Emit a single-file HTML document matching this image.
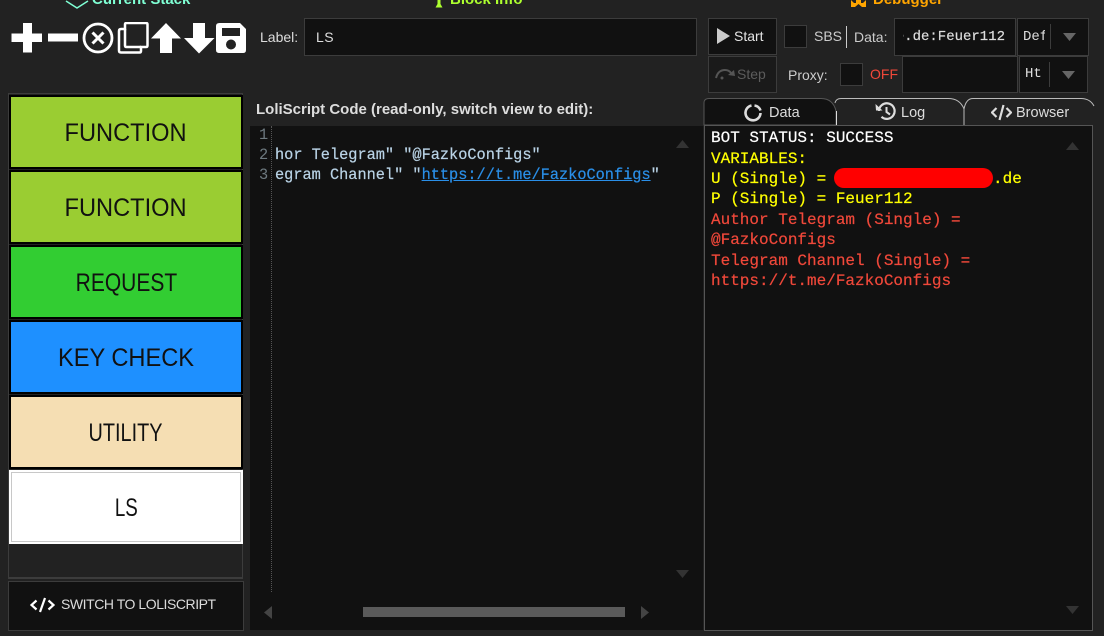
<!DOCTYPE html>
<html>
<head>
<meta charset="utf-8">
<style>
html,body{margin:0;padding:0;background:#222;}
#r{position:relative;width:1104px;height:636px;overflow:hidden;background:#222;font-family:"Liberation Sans",sans-serif;color:#ddd;}
#r div,#r svg,#r span.a{position:absolute;}
.box{box-sizing:border-box;background:#111;border:1px solid #3c3c3c;}
.t{font-size:14px;line-height:18px;white-space:nowrap;color:#ddd;}
.m{font-family:"Liberation Mono",monospace;white-space:nowrap;}
.blk{left:9px;width:234px;height:74px;box-sizing:border-box;border:2px solid #000;color:#111;text-align:center;font-size:25px;line-height:72px;}
.blk span{display:inline-block;transform:scaleX(.945);}
.hd{font-size:15px;font-weight:bold;line-height:18px;white-space:nowrap;}
.ln{left:711px;font-size:16px;line-height:20px;-webkit-text-stroke:.2px currentColor;}
</style>
</head>
<body>
<div id="r">
<!-- cropped headers -->
<svg style="left:64px;top:0" width="26" height="10" viewBox="0 0 26 10"><path d="M2 1 L13 8 L24 1" fill="none" stroke="#7fffd4" stroke-width="1.5"/></svg>
<div class="hd" style="left:92px;top:-9px;color:#7fffd4">Current Stack</div>
<svg style="left:435px;top:0" width="8" height="8" viewBox="0 0 8 8"><path d="M2.500 0H5.500V4L7.500 7.500H0.500L2.500 4Z" fill="#adff2f"/></svg>
<div class="hd" style="left:450px;top:-9px;color:#adff2f">Block Info</div>
<svg style="left:850px;top:0" width="17" height="8" viewBox="0 0 17 8"><path d="M1 0L4 3H6V0H11V3H13L16 0V7H12L8.500 4L5 7H1Z" fill="#ffa500"/></svg>
<div class="hd" style="left:873px;top:-9px;color:#ffa500">Debugger</div>

<!-- toolbar icons -->
<svg style="left:11px;top:22px" width="236" height="33" viewBox="0 0 236 33" fill="#fff">
<path d="M0.500 11.500H12V1H21V11.500H31V20H21V30.500H12V20H0.500Z"/>
<rect x="37" y="11.500" width="30" height="8"/>
<circle cx="87" cy="16" r="14" fill="none" stroke="#fff" stroke-width="2.800"/>
<path d="M81.500 10.500L87 16M92.500 10.500L87 16M81.500 21.500L87 16M92.500 21.500L87 16" stroke="#fff" stroke-width="3" fill="none"/>
<path d="M114 7V2.500Q114 1 115.500 1H135Q136.500 1 136.500 2.500V23.500Q136.500 25 135 25H130V29Q130 30.500 128.500 30.500H110Q108 30.500 108 28.500V9Q108 7 110 7Z" fill="none" stroke="#fff" stroke-width="2.500"/>
<path d="M114 7V23.500Q114 25 115.500 25H130" fill="none" stroke="#fff" stroke-width="2.500"/>
<path d="M155 1L170 16.500H161V31H149V16.500H140Z"/>
<path d="M182 1H194V16H203.500L188 31.500L173 16H182Z"/>
<path fill-rule="evenodd" d="M208.500 1H229L235 7V28Q235 31 232 31H208.500Q205 31 205 28V4Q205 1 208.500 1ZM211 6V14H229V6ZM220 17.500A5 5 0 1 0 220 27.500A5 5 0 1 0 220 17.500Z"/>
</svg>

<!-- label -->
<div class="t" style="left:260px;top:28px">Label:</div>
<div class="box" style="left:304px;top:18px;width:393px;height:38px"></div>
<div class="t" style="left:316px;top:28px;letter-spacing:.5px">LS</div>

<!-- run controls -->
<div class="box" style="left:708px;top:18px;width:69px;height:37px"></div>
<svg style="left:716px;top:27px" width="16" height="18" viewBox="0 0 16 18"><path d="M1 1L14 9L1 17Z" fill="#ccc"/></svg>
<div class="t" style="left:734px;top:27px;color:#e4e4e4">Start</div>
<div class="box" style="left:784px;top:25px;width:23px;height:23px"></div>
<div class="t" style="left:814px;top:27px;color:#ccc">SBS</div>
<div style="left:846px;top:26px;width:1px;height:22px;background:#ccc"></div>
<div class="t" style="left:854px;top:28px;color:#ccc">Data:</div>
<div class="box" style="left:894px;top:18px;width:122px;height:38px"></div>
<div class="m" style="left:895px;top:28px;width:110px;overflow:hidden;font-size:14px;line-height:18px;color:#ddd;text-align:right;-webkit-text-stroke:.2px #ddd">e.de:Feuer112</div>
<div style="left:895px;top:24px;width:8px;height:24px;background:#111"></div>
<div class="box" style="left:1017px;top:18px;width:72px;height:38px"></div>
<div class="m" style="left:1023px;top:28px;width:22px;overflow:hidden;font-size:14px;line-height:18px;color:#ddd">Def</div>
<div style="left:1050px;top:24px;width:1px;height:25px;background:#3c3c3c"></div>
<svg style="left:1063px;top:33px" width="13" height="9"><path d="M0 0H13L6.500 8Z" fill="#666"/></svg>

<div class="box" style="left:708px;top:56px;width:69px;height:37px;background:#1a1a1a"></div>
<svg style="left:714px;top:67px" width="22" height="14" viewBox="0 0 22 14"><path d="M2 11Q4 3 11 3Q15 3 17 6" fill="none" stroke="#555" stroke-width="2"/><path d="M14 8L21 9L20 3Z" fill="#555"/><circle cx="8" cy="11" r="1.500" fill="#555"/></svg>
<div class="t" style="left:737px;top:65px;color:#5c5c5c">Step</div>
<div class="t" style="left:788px;top:66px;color:#ccc">Proxy:</div>
<div class="box" style="left:840px;top:63px;width:23px;height:23px"></div>
<div class="t" style="left:870px;top:65px;color:#f0483a">OFF</div>
<div class="box" style="left:902px;top:56px;width:116px;height:37px"></div>
<div class="box" style="left:1019px;top:56px;width:69px;height:37px"></div>
<div class="m" style="left:1025px;top:65px;width:18px;overflow:hidden;font-size:14px;line-height:18px;color:#ddd">Http</div>
<div style="left:1049px;top:62px;width:1px;height:25px;background:#3c3c3c"></div>
<svg style="left:1062px;top:71px" width="13" height="9"><path d="M0 0H13L6.500 8Z" fill="#666"/></svg>

<!-- stack -->
<div style="left:8px;top:93px;width:235px;height:486px;box-sizing:border-box;border:1px solid #3c3c3c;border-bottom-width:2px;background:#222"></div>
<div class="blk" style="top:95px;background:#9acd32"><span>FUNCTION</span></div>
<div class="blk" style="top:170px;background:#9acd32"><span>FUNCTION</span></div>
<div class="blk" style="top:245px;background:#32cd32"><span style="transform:scaleX(.84)">REQUEST</span></div>
<div class="blk" style="top:320px;background:#1e90ff"><span>KEY CHECK</span></div>
<div class="blk" style="top:395px;background:#f5deb3"><span style="transform:scaleX(.795)">UTILITY</span></div>
<div class="blk" style="top:470px;background:#fff;border-color:#fff;box-shadow:inset 0 0 0 1px #c8c8c8"><span style="transform:scaleX(.75)">LS</span></div>
<div class="box" style="left:8px;top:581px;width:236px;height:50px"></div>
<svg style="left:30px;top:597px" width="25" height="16" viewBox="0 0 25 16"><path d="M6.500 3.500L1.500 8L6.500 12.500M18.500 3.500L23.500 8L18.500 12.500" fill="none" stroke="#fff" stroke-width="2.200"/><path d="M15 1L10 15" fill="none" stroke="#fff" stroke-width="2.200"/></svg>
<div class="t" style="left:61px;top:595px;color:#dcdcdc;font-size:14px;letter-spacing:-.45px">SWITCH TO LOLISCRIPT</div>

<!-- code -->
<div class="hd" style="left:256px;top:101px;font-size:15px;color:#ddd">LoliScript Code (read-only, switch view to edit):</div>
<div style="left:250px;top:126px;width:453px;height:504px;background:#111"></div>
<div style="left:271px;top:126px;width:0;height:466px;border-left:1px dotted #555"></div>
<div class="m" style="left:259px;top:125px;font-size:15.300px;line-height:20px;color:#6e7a80">1<br>2<br>3</div>
<div class="m" style="left:275px;top:145px;font-size:15.280px;line-height:20px;color:#b9d3e6;-webkit-text-stroke:.2px #b9d3e6">hor Telegram" "@FazkoConfigs"<br>egram Channel" "<span style="color:#2a8fe8;text-decoration:underline;-webkit-text-stroke:.2px #2a8fe8">https://t.me/FazkoConfigs</span>"</div>
<svg style="left:676px;top:140px" width="13" height="8"><path d="M0 8H13L6.500 0Z" fill="#333"/></svg>
<svg style="left:676px;top:570px" width="13" height="8"><path d="M0 0H13L6.500 8Z" fill="#333"/></svg>
<svg style="left:264px;top:606px" width="8" height="13"><path d="M8 0V13L0 6.500Z" fill="#444"/></svg>
<svg style="left:641px;top:606px" width="8" height="13"><path d="M0 0V13L8 6.500Z" fill="#444"/></svg>
<div style="left:363px;top:607px;width:262px;height:10px;background:#5a5a5a"></div>

<!-- right tabs -->
<svg style="left:703px;top:97px" width="392" height="30" viewBox="0 0 392 30">
<path d="M1 28V6Q1 1.500 6 1.500H118Q130 1.500 133 14V28Z" fill="#111" stroke="#555"/>
<path d="M132 6Q133 1.500 138 1.500H245Q257 1.500 261 12V28" fill="none" stroke="#bbb"/>
<path d="M133.500 28V14" fill="none" stroke="#ddd"/>
<path d="M261 12Q263 1.500 270 1.500H378Q387 1.500 391 9" fill="none" stroke="#bbb"/>
</svg>
<svg style="left:743px;top:103px" width="20" height="20" viewBox="0 0 20 20"><path d="M8.500 2.500A7.500 7.500 0 1 0 17.500 10" fill="none" stroke="#ddd" stroke-width="2.600"/><path d="M11.500 2.500A7.500 7.500 0 0 1 17.500 7.500" fill="none" stroke="#ddd" stroke-width="2.600"/></svg>
<div class="t" style="left:769px;top:104px;color:#ddd;font-size:14.500px">Data</div>
<svg style="left:875px;top:101px" width="21" height="20" viewBox="0 0 21 20"><path d="M4 10A7.800 7.800 0 1 1 6.500 15.800" fill="none" stroke="#ddd" stroke-width="2.200"/><path d="M0.500 3L7.500 9.500H1Z" fill="#ddd"/><path d="M11.500 6V11L15 13.500" fill="none" stroke="#ddd" stroke-width="2"/></svg>
<div class="t" style="left:901px;top:104px;color:#ddd;font-size:14.500px">Log</div>
<svg style="left:991px;top:104px" width="21" height="17" viewBox="0 0 21 17"><path d="M5.500 4L1 8.500L5.500 13M15.500 4L20 8.500L15.500 13" fill="none" stroke="#ddd" stroke-width="2.200"/><path d="M12.500 1L8.500 16" fill="none" stroke="#ddd" stroke-width="2.200"/></svg>
<div class="t" style="left:1016px;top:104px;color:#ddd;font-size:14.500px">Browser</div>

<!-- data panel -->
<div style="left:704px;top:125px;width:389px;height:506px;box-sizing:border-box;background:#111;border:1px solid #555"></div>
<div class="m ln" style="top:128px;color:#fff">BOT STATUS: SUCCESS</div>
<div class="m ln" style="top:149px;color:#ffff00">VARIABLES:</div>
<div class="m ln" style="top:169px;color:#ffff00">U (Single) = </div>
<div style="left:834px;top:168px;width:159px;height:20px;border-radius:10px;background:#ff0000"></div>
<div class="m ln" style="left:993px;top:169px;color:#ffff00">.de</div>
<div class="m ln" style="top:189px;color:#ffff00">P (Single) = Feuer112</div>
<div class="m ln" style="top:210px;color:#f0483a">Author Telegram (Single) =</div>
<div class="m ln" style="top:230px;color:#f0483a">@FazkoConfigs</div>
<div class="m ln" style="top:251px;color:#f0483a">Telegram Channel (Single) =</div>
<div class="m ln" style="top:271px;color:#f0483a">https://t.me/FazkoConfigs</div>
<svg style="left:1066px;top:142px" width="13" height="8"><path d="M0 8H13L6.500 0Z" fill="#333"/></svg>
<svg style="left:1066px;top:606px" width="13" height="8"><path d="M0 0H13L6.500 8Z" fill="#333"/></svg>
</div>
</body>
</html>
